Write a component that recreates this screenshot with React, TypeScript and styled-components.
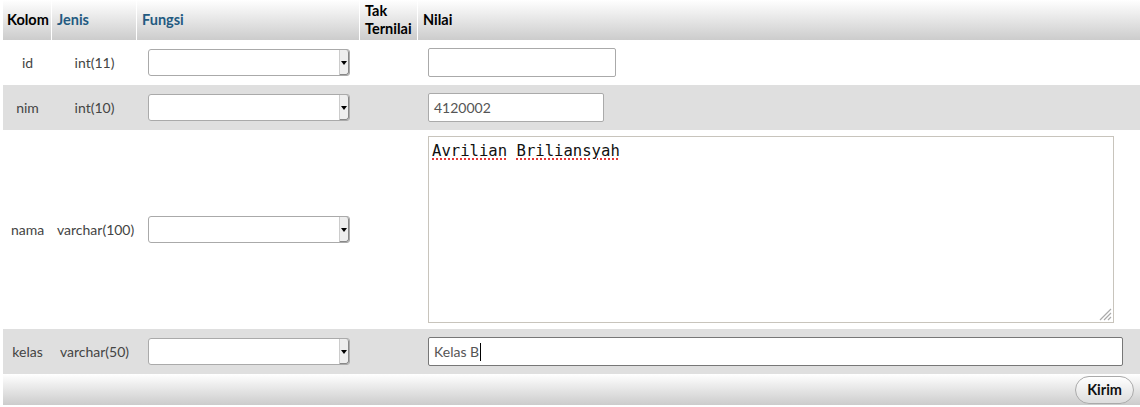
import React from "react";
import styled, { createGlobalStyle } from "styled-components";

const GlobalStyle = createGlobalStyle`
  html, body {
    margin: 0;
    padding: 0;
    background: #fff;
  }
  body {
    font-family: Lato, "Open Sans", sans-serif;
    font-size: 14px;
    color: #444;
  }
`;

const Table = styled.table`
  margin-left: 3px;
  width: 1137px;
  border-collapse: collapse;
  border-spacing: 0;
  table-layout: fixed;
`;

const Th = styled.th<{ $link?: boolean }>`
  height: 40px;
  padding: 0 5px;
  text-align: left;
  font-weight: bold;
  font-size: 14.5px;
  line-height: 18px;
  color: ${(p) => (p.$link ? "#235a81" : "#000")};
  background: linear-gradient(#ffffff, #cccccc);
  box-shadow: inset -1px 0 0 #ffffff;
  &:first-child {
    padding-left: 4px;
  }
  &:last-child {
    box-shadow: none;
  }
`;

const Tr = styled.tr<{ $odd?: boolean; $h: number }>`
  background: ${(p) => (p.$odd ? "#dfdfdf" : "#ffffff")};
  height: ${(p) => p.$h}px;
`;

const Td = styled.td<{ $center?: boolean }>`
  padding: 0 5px;
  text-align: ${(p) => (p.$center ? "center" : "left")};
  vertical-align: middle;
  white-space: nowrap;
`;

const ValueCell = styled.td`
  padding: 0 0 0 10px;
  vertical-align: middle;
`;

const Select = styled.div`
  position: relative;
  width: 202px;
  height: 27px;
  margin-left: 6px;
  box-sizing: border-box;
  border: 1px solid #aaa;
  border-radius: 3px;
  background: #fff;
`;

const SelectArrow = styled.span`
  position: absolute;
  right: 0;
  top: 0;
  bottom: 0;
  width: 8px;
  background: #eee;
  border-left: 1px solid #ccc;
  border-right: 1px solid #888;
  border-bottom: 1px solid #888;
  border-radius: 0 3px 3px 0;
  &::after {
    content: "";
    position: absolute;
    left: 1px;
    top: 11px;
    border-left: 3px solid transparent;
    border-right: 3px solid transparent;
    border-top: 4px solid #000;
  }
`;

const Input = styled.div<{ $w: number; $dark?: boolean }>`
  width: ${(p) => p.$w}px;
  height: 29px;
  box-sizing: border-box;
  border: 1px solid ${(p) => (p.$dark ? "#777" : "#aaa")};
  border-radius: 2px;
  background: #fff;
  padding: 0 5px;
  display: flex;
  align-items: center;
  color: #555;
  font-size: 14px;
`;

const TextArea = styled.div`
  position: relative;
  width: 686px;
  height: 187px;
  box-sizing: border-box;
  border: 1px solid #c8c4bc;
  background: #fff;
  padding: 5px 3px;
  font-family: "DejaVu Sans Mono", monospace;
  font-size: 15.6px;
  color: #111;
`;

const Misspelled = styled.span`
  text-decoration: underline dotted #d00;
  text-underline-offset: 3px;
`;

const Grip = styled.svg`
  position: absolute;
  right: 1px;
  bottom: 1px;
`;

const Caret = styled.span`
  display: inline-block;
  width: 1px;
  height: 18px;
  background: #000;
  margin-left: 1px;
`;

const FootCell = styled.td`
  height: 31px;
  padding: 0 6px 0 0;
  text-align: right;
  background: linear-gradient(#ffffff, #cccccc);
`;

const Button = styled.button`
  height: 28px;
  padding: 0 11px;
  border: 1px solid #aaa;
  border-radius: 14px;
  background: linear-gradient(#ffffff, #dddddd);
  font-family: Lato, "Open Sans", sans-serif;
  font-weight: bold;
  font-size: 14.5px;
  color: #111;
  vertical-align: middle;
`;

const rows = [
  { name: "id", type: "int(11)", w: 188, value: "" },
  { name: "nim", type: "int(10)", w: 176, value: "4120002" },
];

const FuncSelect = () => (
  <Select>
    <SelectArrow />
  </Select>
);

export default function App() {
  return (
    <>
      <GlobalStyle />
      <Table>
        <colgroup>
          <col style={{ width: 49 }} />
          <col style={{ width: 85 }} />
          <col style={{ width: 223 }} />
          <col style={{ width: 58 }} />
          <col />
        </colgroup>
        <thead>
          <tr>
            <Th>Kolom</Th>
            <Th $link>Jenis</Th>
            <Th $link>Fungsi</Th>
            <Th>
              Tak
              <br />
              Ternilai
            </Th>
            <Th>Nilai</Th>
          </tr>
        </thead>
        <tbody>
          {rows.map((r, i) => (
            <Tr key={r.name} $odd={i % 2 === 1} $h={45}>
              <Td $center>{r.name}</Td>
              <Td $center>{r.type}</Td>
              <Td>
                <FuncSelect />
              </Td>
              <Td />
              <ValueCell>
                <Input $w={r.w}>{r.value}</Input>
              </ValueCell>
            </Tr>
          ))}
          <Tr $h={199}>
            <Td $center>nama</Td>
            <Td $center>varchar(100)</Td>
            <Td>
              <FuncSelect />
            </Td>
            <Td />
            <ValueCell>
              <TextArea>
                <Misspelled>Avrilian</Misspelled> <Misspelled>Briliansyah</Misspelled>
                <Grip width="14" height="14" viewBox="0 0 14 14">
                  <path d="M13 2 L2 13 M13 6 L6 13 M13 10 L10 13" stroke="#aaa" strokeWidth="1.2" />
                </Grip>
              </TextArea>
            </ValueCell>
          </Tr>
          <Tr $odd $h={45}>
            <Td $center>kelas</Td>
            <Td $center>varchar(50)</Td>
            <Td>
              <FuncSelect />
            </Td>
            <Td />
            <ValueCell>
              <Input $w={695} $dark>
                Kelas B<Caret />
              </Input>
            </ValueCell>
          </Tr>
        </tbody>
        <tfoot>
          <tr>
            <FootCell colSpan={5}>
              <Button>Kirim</Button>
            </FootCell>
          </tr>
        </tfoot>
      </Table>
    </>
  );
}
